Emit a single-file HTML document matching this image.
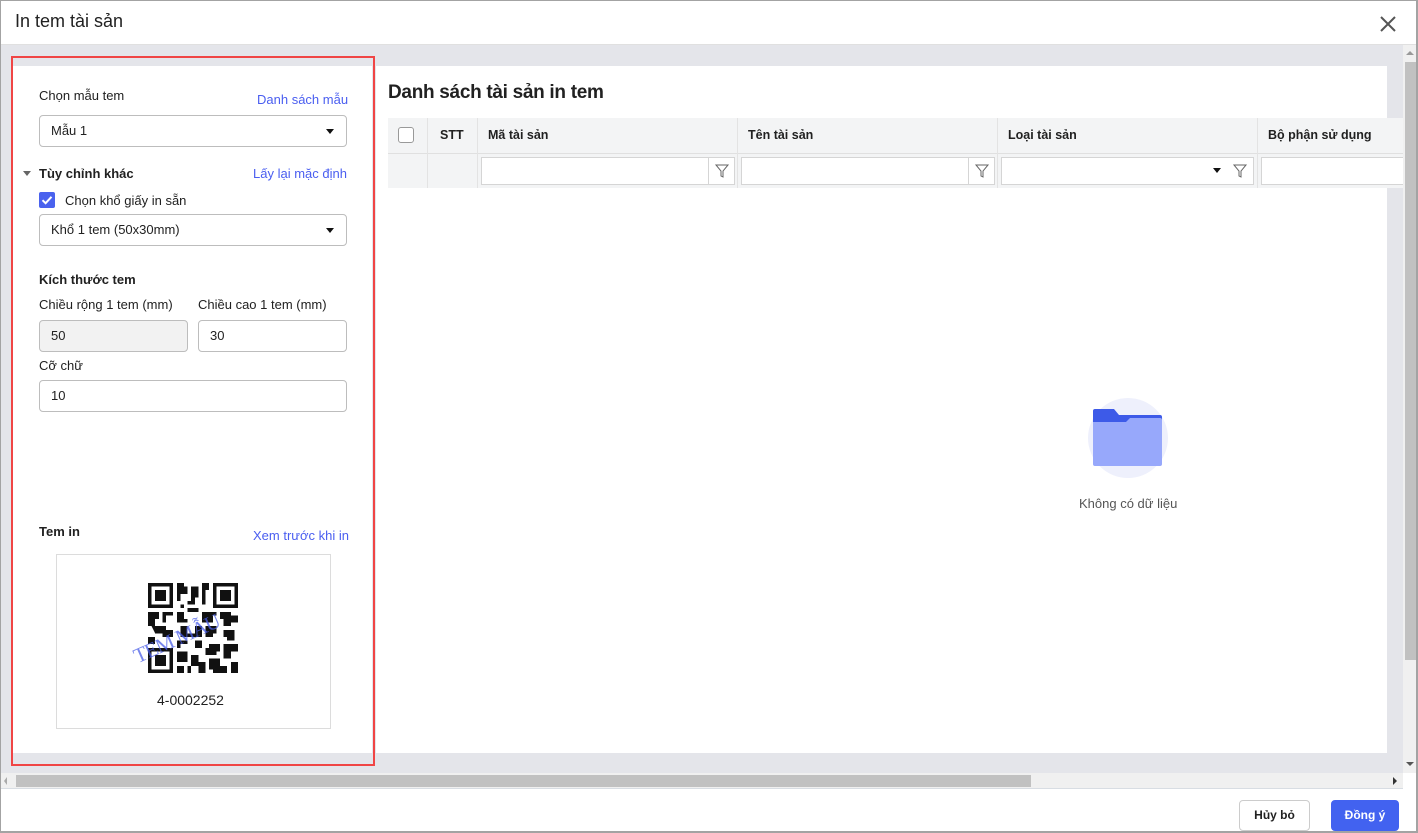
<!DOCTYPE html>
<html><head><meta charset="utf-8"><style>
*{box-sizing:border-box;margin:0;padding:0}
body{width:1418px;height:833px;overflow:hidden;font-family:"Liberation Sans",Arial,sans-serif;font-size:13px;color:#212121;background:#fff;position:relative}
.a{position:absolute}
.frame{left:0;top:0;width:1418px;height:833px;border:1px solid #a3a3a3;border-right:2px solid #a3a3a3;border-bottom:2px solid #a3a3a3}
.lbl{font-size:13px;color:#212121}
.link{color:#4a5ef0;font-size:13px}
.inp{border:1px solid #bdbdbd;border-radius:4px;background:#fff;height:32px;padding-left:11px;line-height:30px;font-size:13px}
.caret{position:absolute;right:12px;top:13px;width:0;height:0;border-left:4.5px solid transparent;border-right:4.5px solid transparent;border-top:5px solid #111}
.th{top:118px;height:35px;line-height:35px;font-weight:bold;font-size:12.5px}
.fi{top:157px;height:28px;border:1px solid #d5d5d5;background:#fff}
.fb{position:absolute;right:0;top:0;width:26px;height:26px;border-left:1px solid #d5d5d5}
</style></head><body>
<div class="a" style="left:0;top:0;width:1418px;height:45px;background:#fff;border-bottom:1px solid #e0e0e0"></div>
<div class="a" style="left:15px;top:11px;font-size:18px;color:#212121">In tem tài sản</div>
<svg class="a" style="left:1380px;top:16px" width="16" height="16"><path d="M1 1L15 15M15 1L1 15" stroke="#555" stroke-width="2"/></svg>

<div class="a" style="left:1px;top:45px;width:1402px;height:728px;background:#e4e5ea"></div>
<div class="a" style="left:13px;top:66px;width:359px;height:687px;background:#fff"></div>
<div class="a" style="left:11px;top:56px;width:364px;height:710px;border:2px solid #f04545"></div>

<div class="a lbl" style="left:39px;top:88px">Chọn mẫu tem</div>
<div class="a link" style="left:257px;top:92px">Danh sách mẫu</div>
<div class="a inp" style="left:39px;top:115px;width:308px">Mẫu 1<span class="caret"></span></div>
<div class="a" style="left:23px;top:171px;border-left:4px solid transparent;border-right:4px solid transparent;border-top:5px solid #666"></div>
<div class="a" style="left:39px;top:166px;font-weight:bold;font-size:13px">Tùy chỉnh khác</div>
<div class="a link" style="left:253px;top:166px">Lấy lại mặc định</div>
<div class="a" style="left:39px;top:192px;width:16px;height:16px;background:#4a62ee;border-radius:2px"><svg width="16" height="16"><path d="M3.5 8.2L6.6 11.2L12.5 4.8" stroke="#fff" stroke-width="2" fill="none"/></svg></div>
<div class="a lbl" style="left:65px;top:193px">Chọn khổ giấy in sẵn</div>
<div class="a inp" style="left:39px;top:214px;width:308px">Khổ 1 tem (50x30mm)<span class="caret"></span></div>
<div class="a" style="left:39px;top:272px;font-weight:bold">Kích thước tem</div>
<div class="a lbl" style="left:39px;top:297px">Chiều rộng 1 tem (mm)</div>
<div class="a lbl" style="left:198px;top:297px">Chiều cao 1 tem (mm)</div>
<div class="a inp" style="left:39px;top:320px;width:149px;background:#f2f2f2">50</div>
<div class="a inp" style="left:198px;top:320px;width:149px">30</div>
<div class="a lbl" style="left:39px;top:358px">Cỡ chữ</div>
<div class="a inp" style="left:39px;top:380px;width:308px">10</div>
<div class="a" style="left:39px;top:524px;font-weight:bold">Tem in</div>
<div class="a link" style="left:253px;top:528px">Xem trước khi in</div>
<div class="a" style="left:56px;top:554px;width:275px;height:175px;border:1px solid #dcdcdc"></div>
<svg class="a" style="left:148px;top:583px" width="90" height="90" viewBox="0 0 25 25" shape-rendering="crispEdges">
<g fill="#111"><path d="M0 0h7v7h-7zM18 0h7v7h-7zM0 18h7v7h-7z"/></g>
<g fill="#fff"><path d="M1 1h5v5h-5zM19 1h5v5h-5zM1 19h5v5h-5z"/></g>
<g fill="#111"><path d="M2 2h3v3h-3zM20 2h3v3h-3zM2 20h3v3h-3z"/>
<path d="M8 0h2v1h1v2h-2v2h-1zM12 1h2v3h-1v2h-2v-1h1zM15 0h2v2h-1v4h-1zM9 6h1v1h-1zM11 7h3v1h-3zM0 8h3v2h-1v2h-2zM4 8h3v1h-2v2h-1zM8 8h2v2h1v1h-3zM15 8h4v1h-1v2h-3zM20 8h3v1h2v2h-2v1h-2v-2h-1zM1 12h4v1h2v2h-3v-1h-2zM9 12h2v2h2v-2h2v3h-6zM16 12h3v2h-1v1h-2zM21 13h3v3h-2v-1h-1zM0 15h2v2h-2zM8 16h3v1h-2v1h-1zM13 16h2v2h2v-1h3v2h-1v1h-3v-2h-3zM21 17h4v2h-2v2h-2zM8 19h3v3h-3zM12 20h2v2h2v3h-2v-2h-2zM17 21h3v2h2v2h-4v-1h-1zM23 22h2v3h-2zM8 23h2v2h-2zM11 23h1v2h-1z"/></g>
</svg>
<div class="a" style="left:140px;top:644px;transform:rotate(-24deg);transform-origin:left bottom;color:#4a5ee8;font-family:'Liberation Serif',serif;font-size:21px;opacity:.75;letter-spacing:-1px;white-space:nowrap">TEM MẪU</div>
<div class="a" style="left:157px;top:692px;font-size:14px">4-0002252</div>

<div class="a" style="left:376px;top:66px;width:1011px;height:687px;background:#fff"></div>
<div class="a" style="left:388px;top:82px;font-size:19px;font-weight:bold;letter-spacing:-0.3px">Danh sách tài sản in tem</div>
<div class="a" style="left:388px;top:118px;width:1015px;height:70px;background:#f3f4f5"></div>
<div class="a" style="left:388px;top:153px;width:1015px;height:1px;background:#e0e0e0"></div>
<div class="a" style="left:398px;top:127px;width:16px;height:16px;border:1px solid #999;border-radius:3px;background:#fff"></div>
<div class="a" style="left:427px;top:118px;width:1px;height:70px;background:#e3e3e3"></div>
<div class="a" style="left:477px;top:118px;width:1px;height:70px;background:#e3e3e3"></div>
<div class="a th" style="left:440px">STT</div>
<div class="a th" style="left:488px">Mã tài sản</div>
<div class="a th" style="left:748px">Tên tài sản</div>
<div class="a th" style="left:1008px">Loại tài sản</div>
<div class="a th" style="left:1268px">Bộ phận sử dụng</div>
<div class="a" style="left:737px;top:118px;width:1px;height:70px;background:#e3e3e3"></div>
<div class="a" style="left:997px;top:118px;width:1px;height:70px;background:#e3e3e3"></div>
<div class="a" style="left:1257px;top:118px;width:1px;height:70px;background:#e3e3e3"></div>
<div class="a fi" style="left:481px;width:254px"><div class="fb"><svg width="26" height="26"><path d="M7 7h12l-5 6v6l-2-1v-5z" fill="none" stroke="#666"/></svg></div></div>
<div class="a fi" style="left:741px;width:254px"><div class="fb"><svg width="26" height="26"><path d="M7 7h12l-5 6v6l-2-1v-5z" fill="none" stroke="#666"/></svg></div></div>
<div class="a fi" style="left:1001px;width:253px"><div style="position:absolute;right:32px;top:10px;border-left:4px solid transparent;border-right:4px solid transparent;border-top:5px solid #111"></div><div class="fb" style="border-left:none"><svg width="26" height="26"><path d="M7 7h12l-5 6v6l-2-1v-5z" fill="none" stroke="#666"/></svg></div></div>
<div class="a fi" style="left:1261px;width:142px;border-right:none"></div>

<div class="a" style="left:1088px;top:398px;width:80px;height:80px;border-radius:50%;background:#eef0fc"></div>
<svg class="a" style="left:1092px;top:408px" width="72" height="60"><path d="M1 3Q1 1 3 1H22L27 7H68Q70 7 70 9V16H1z" fill="#3d5ae8"/><path d="M1 14H34L38 10H68Q70 10 70 12V56Q70 58 68 58H3Q1 58 1 56z" fill="#97a8fb"/></svg>
<div class="a" style="left:1079px;top:496px;font-size:13px;color:#555">Không có dữ liệu</div>

<div class="a" style="left:1403px;top:45px;width:14px;height:728px;background:#f0f0f0"></div>
<div class="a" style="left:1405px;top:62px;width:11px;height:598px;background:#c1c1c1"></div>
<div class="a" style="left:1406px;top:51px;border-left:4px solid transparent;border-right:4px solid transparent;border-bottom:4px solid #999"></div>
<div class="a" style="left:1406px;top:762px;border-left:4px solid transparent;border-right:4px solid transparent;border-top:4px solid #555"></div>
<div class="a" style="left:1px;top:773px;width:1402px;height:16px;background:#f0f0f0;border-bottom:1px solid #d8dde3"></div>
<div class="a" style="left:16px;top:775px;width:1015px;height:12px;background:#c1c1c1"></div>
<div class="a" style="left:4px;top:777px;border-top:4px solid transparent;border-bottom:4px solid transparent;border-right:3px solid #aaa"></div>
<div class="a" style="left:1393px;top:777px;border-top:4px solid transparent;border-bottom:4px solid transparent;border-left:4px solid #333"></div>

<div class="a" style="left:1239px;top:800px;width:71px;height:31px;border:1px solid #ccc;border-radius:4px;background:#fff;text-align:center;line-height:29px;font-weight:bold;font-size:12px">Hủy bỏ</div>
<div class="a" style="left:1331px;top:800px;width:68px;height:31px;border-radius:4px;background:#4262f0;color:#fff;text-align:center;line-height:31px;font-weight:bold;font-size:12px">Đồng ý</div>
<div class="a frame"></div>
</body></html>
